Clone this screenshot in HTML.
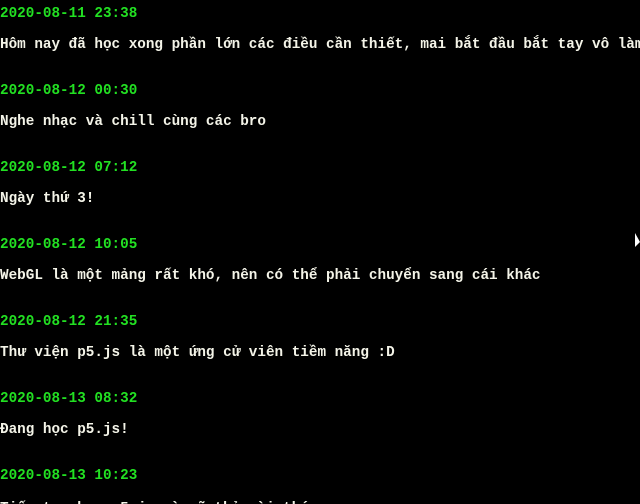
<!DOCTYPE html>
<html><head><meta charset="utf-8"><style>
html,body{margin:0;background:#000;width:640px;height:504px;overflow:hidden}
body{font-family:"Liberation Mono","DejaVu Sans Mono",monospace;font-weight:bold;font-size:14.3px;white-space:nowrap;position:relative}
.d{position:absolute;left:0;color:#22e022}
.t{position:absolute;left:0;color:#f4f4e8}
</style></head><body>
<div class="d" style="top:6px">2020-08-11 23:38</div>
<div class="t" style="top:37px">Hôm nay đã học xong phần lớn các điều cần thiết, mai bắt đầu bắt tay vô làm</div>
<div class="d" style="top:83px">2020-08-12 00:30</div>
<div class="t" style="top:114px">Nghe nhạc và chill cùng các bro</div>
<div class="d" style="top:160px">2020-08-12 07:12</div>
<div class="t" style="top:191px">Ngày thứ 3!</div>
<div class="d" style="top:237px">2020-08-12 10:05</div>
<div class="t" style="top:268px">WebGL là một mảng rất khó, nên có thể phải chuyển sang cái khác</div>
<div class="d" style="top:314px">2020-08-12 21:35</div>
<div class="t" style="top:345px">Thư viện p5.js là một ứng cử viên tiềm năng :D</div>
<div class="d" style="top:391px">2020-08-13 08:32</div>
<div class="t" style="top:422px">Đang học p5.js!</div>
<div class="d" style="top:468px">2020-08-13 10:23</div>
<div class="t" style="top:501px">Tiếp tục học p5.js và vẽ thử vài thứ</div>
<svg style="position:absolute;left:635px;top:233px" width="6" height="16"><path d="M0 0 L0 14 L5 9 Z" fill="#fff"/></svg>
</body></html>
